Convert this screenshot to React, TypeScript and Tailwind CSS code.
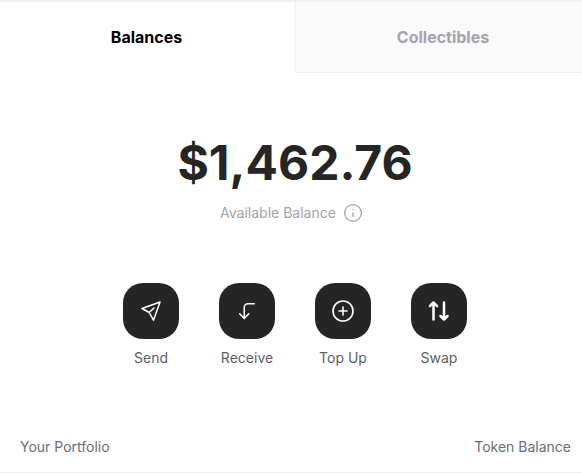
import { CirclePlus, CornerLeftDown, Info } from 'lucide-react'
import type { ReactNode } from 'react'

const actions: { label: string; icon: ReactNode }[] = [
  {
    label: 'Send',
    icon: (
      <svg width="20" height="20" viewBox="0 0 20 20" fill="none" stroke="white" strokeWidth="1.5" strokeLinejoin="round" strokeLinecap="round">
        <path d="M19 1 1 7.500l7.200 4 4.300 7.700L19 1Z" />
        <path d="M8.200 11.500 13 7" />
      </svg>
    ),
  },
  { label: 'Receive', icon: <CornerLeftDown size={22} strokeWidth={1.7} color="white" /> },
  { label: 'Top Up', icon: <CirclePlus size={24} strokeWidth={1.6} color="white" /> },
  {
    label: 'Swap',
    icon: (
      <svg width="24" height="24" viewBox="0 0 24 24" fill="none" stroke="white" strokeWidth="2.500" strokeLinejoin="round" strokeLinecap="round">
        <path d="M6.500 20.500V3.500M3 7l3.500-3.500L10 7" />
        <path d="M17 3.500v17M13.500 17l3.500 3.500 3.500-3.500" />
      </svg>
    ),
  },
]

export default function App() {
  return (
    <div className="flex h-[474px] w-[582px] flex-col overflow-hidden bg-white pb-px font-['Inter',sans-serif]">
      <div className="flex h-[73px] border-t-2 border-[#f0f0f0]">
        <div className="flex w-[295px] items-center justify-center pb-px pr-0.5 text-base font-bold text-black">Balances</div>
        <div className="flex flex-1 items-center justify-center border-b border-l border-[#f0f0f0] bg-[#fafafa] pl-2 text-base font-bold text-[#a3a3ad]">
          Collectibles
        </div>
      </div>

      <div className="mt-[60px] flex flex-col items-center">
        <div className="pl-2 text-5xl font-bold leading-[60px] text-[#252525]">$1,462.76</div>
        <div className="mt-2 flex items-center gap-[7px] pl-px text-sm leading-[24px] text-[#a3a3ad]">
          Available Balance
          <Info size={20} strokeWidth={1.6} />
        </div>
      </div>

      <div className="mt-[58px] flex justify-center gap-10 pl-2">
        {actions.map((a) => (
          <div key={a.label} className="flex w-14 flex-col items-center">
            <button className="flex h-14 w-14 items-center justify-center rounded-[20px] bg-[#252525]">{a.icon}</button>
            <span className="mt-[9px] whitespace-nowrap text-sm leading-5 text-[#5c5f66]">{a.label}</span>
          </div>
        ))}
      </div>

      <div className="mt-auto flex h-[36px] justify-between border-b border-[#f0f0f0] pl-5 pr-[11px] text-sm text-[#6b6e76]">
        <span>Your Portfolio</span>
        <span>Token Balance</span>
      </div>
    </div>
  )
}
